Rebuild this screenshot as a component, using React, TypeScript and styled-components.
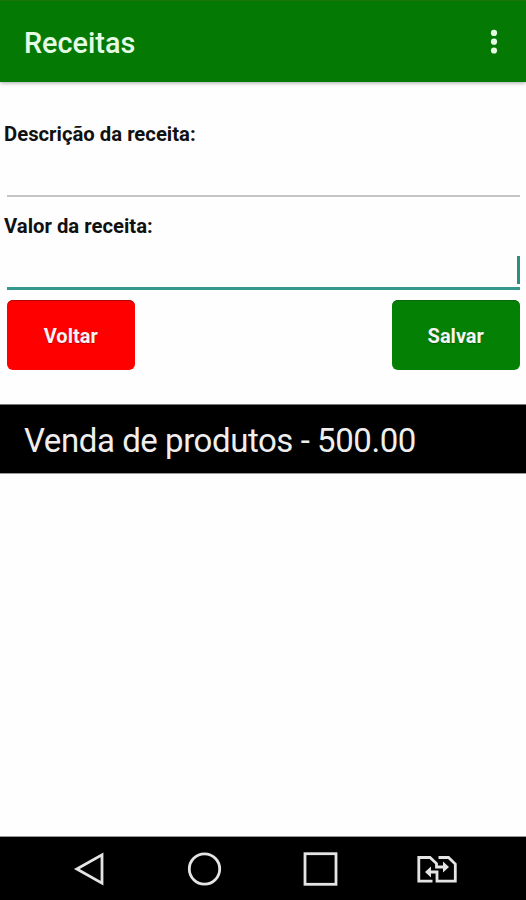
import React from 'react';
import styled, { createGlobalStyle } from 'styled-components';

const GlobalStyle = createGlobalStyle`
  * { box-sizing: border-box; }
  body { margin: 0; background: #fefefe; }
  button, input { font-family: inherit; }
`;

const Screen = styled.div`
  display: flex;
  flex-direction: column;
  width: 526px;
  height: 900px;
  overflow: hidden;
  background: #fefefe;
  font-family: Roboto, sans-serif;
`;

const AppBar = styled.header`
  display: flex;
  align-items: center;
  justify-content: space-between;
  flex: none;
  height: 82px;
  padding: 4px 22px 0 24px;
  background: #047a04;
  border-top: 1px solid #1c7408;
  box-shadow: 0 1px 4px rgba(0, 0, 0, 0.35);
`;

const Title = styled.h1`
  margin: -2px 0 0;
  color: #e6fbe6;
  font-size: 28.8px;
  font-weight: 500;
  line-height: 34px;
`;

const MenuButton = styled.button`
  display: flex;
  padding: 0;
  border: 0;
  background: none;
  margin-top: -4px;
`;

const Form = styled.form`
  display: flex;
  flex-direction: column;
  flex: none;
  padding-top: 38px;
`;

const Field = styled.label`
  display: flex;
  flex-direction: column;
  height: 92px;
`;

const FieldLabel = styled.span`
  padding-left: 4px;
  color: #111;
  font-size: 20.3px;
  font-weight: 700;
  line-height: 28px;
`;

const InputLine = styled.span<{ $active?: boolean }>`
  display: flex;
  align-items: flex-end;
  justify-content: flex-end;
  height: ${({ $active }) => ($active ? 50 : 49)}px;
  margin: 0 6px 0 7px;
  padding-bottom: 3px;
  border-bottom: ${({ $active }) => ($active ? '3px solid #35988e' : '2px solid #c4c4c4')};
`;

const Caret = styled.span`
  width: 3px;
  height: 28px;
  background: #2b8f84;
`;

const Actions = styled.div`
  display: flex;
  justify-content: space-between;
  padding: 0 6px 0 6.5px;
  margin-top: -4px;
`;

const ActionButton = styled.button<{ $color: string; $edge: string }>`
  width: 128.5px;
  height: 70px;
  padding: 2px 0 0;
  border: 0;
  border-radius: 6px;
  background: ${({ $color }) => $color};
  box-shadow: inset 0 1px 0 ${({ $edge }) => $edge};
  color: #f4f4f4;
  font-size: 20px;
  font-weight: 700;
  text-shadow: 0 1px 1px rgba(0, 0, 0, 0.3);
`;

const List = styled.ul`
  flex: 1;
  margin: 34px 0 0;
  padding: 0;
  list-style: none;
`;

const ListItem = styled.li`
  height: 70px;
  padding: 2px 24px 0;
  border-top: 1px solid #777;
  border-bottom: 1px solid #999;
  background: #000;
  color: #eee;
  font-size: 33px;
  letter-spacing: -0.44px;
  line-height: 68px;
  white-space: nowrap;
`;

const NavBar = styled.nav`
  display: grid;
  grid-template-columns: repeat(4, 116px);
  justify-content: center;
  align-items: center;
  flex: none;
  height: 64px;
  background: #000;
  border-top: 1px solid #999;
`;

const NavButton = styled.button`
  display: flex;
  justify-content: center;
  padding: 0;
  border: 0;
  background: none;
`;

const NavIcon = styled.svg`
  fill: none;
  stroke: #e4e4e4;
  stroke-width: 2.8;
`;

export default function App() {
  return (
    <Screen>
      <GlobalStyle />
      <AppBar>
        <Title>Receitas</Title>
        <MenuButton aria-label="Menu">
          <svg width="20" height="28" viewBox="0 0 20 28" fill="#e6fbe6">
            <circle cx="10" cy="4.9" r="3.1" />
            <circle cx="10" cy="13.7" r="3.1" />
            <circle cx="10" cy="22.5" r="3.1" />
          </svg>
        </MenuButton>
      </AppBar>
      <Form>
        <Field>
          <FieldLabel>Descrição da receita:</FieldLabel>
          <InputLine />
        </Field>
        <Field>
          <FieldLabel>Valor da receita:</FieldLabel>
          <InputLine $active>
            <Caret />
          </InputLine>
        </Field>
        <Actions>
          <ActionButton type="button" $color="#fe0000" $edge="#b00808">Voltar</ActionButton>
          <ActionButton type="button" $color="#048004" $edge="#0a660a">Salvar</ActionButton>
        </Actions>
      </Form>
      <List>
        <ListItem>Venda de produtos - 500.00</ListItem>
      </List>
      <NavBar>
        <NavButton aria-label="Voltar">
          <NavIcon width="36" height="36" viewBox="0 0 36 36">
            <path d="M31 3.800V32.200L5.800 18Z" />
          </NavIcon>
        </NavButton>
        <NavButton aria-label="Início">
          <NavIcon width="36" height="36" viewBox="0 0 36 36">
            <circle cx="17.500" cy="18" r="15.200" />
          </NavIcon>
        </NavButton>
        <NavButton aria-label="Recentes">
          <NavIcon width="36" height="36" viewBox="0 0 36 36">
            <rect x="2" y="2.700" width="31" height="30.600" />
          </NavIcon>
        </NavButton>
        <NavButton aria-label="Trocar chip">
          <NavIcon width="42" height="30" viewBox="0 0 42 30">
            <path d="M16.500 27.200H2.800V3.500H14L20.500 9.500V13H28" />
            <path d="M22.500 3.500H32.500L39.300 10V27.200H21V18H13" />
            <path d="M27 7.500L33 13L27 18.500ZM15 12.500L9 18L15 23.500Z" fill="#e4e4e4" stroke="none" />
          </NavIcon>
        </NavButton>
      </NavBar>
    </Screen>
  );
}
